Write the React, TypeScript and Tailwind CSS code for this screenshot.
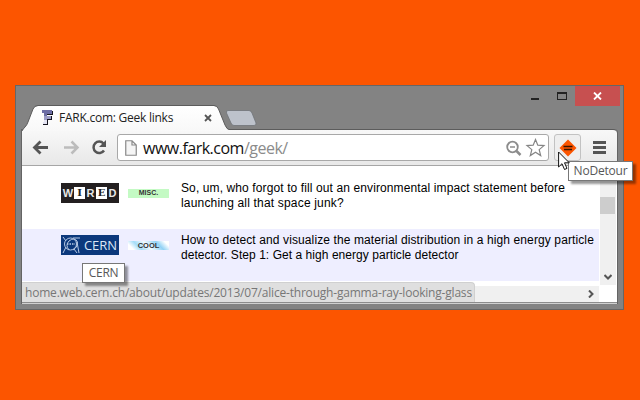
import React from "react";

const ui = "font-['Open_Sans','Noto_Sans',sans-serif]";

function TitleBar() {
  return (
    <div className="flex h-[19px] justify-end pr-[3px]">
      <svg width="50" height="19" viewBox="0 0 50 19" shapeRendering="crispEdges">
        <rect x="1" y="12" width="8" height="2" fill="#222" />
        <path d="M27 6h10v8H27zM28 8v5h8V8z" fill="#222" fillRule="evenodd" />
      </svg>
      <div className="ml-[-5px] flex h-5 w-[45px] shrink-0 items-center justify-center bg-[#c75050]">
        <svg width="9" height="8" viewBox="0 0 9 8">
          <path d="M1 .5l7 7M8 .5l-7 7" stroke="#fff" strokeWidth="1.8" />
        </svg>
      </div>
    </div>
  );
}

function TabStrip() {
  return (
    <div className="flex h-[24px] pl-[6px]">
      <div className="relative z-10 h-[26px] w-[207px] shrink-0">
        <svg className="absolute inset-0" width="207" height="26" viewBox="0 0 207 26">
          <defs>
            <linearGradient id="tab" x1="0" y1="0" x2="0" y2="1">
              <stop offset="0" stopColor="#fff" />
              <stop offset="1" stopColor="#f8f8f8" />
            </linearGradient>
          </defs>
          <path d="M0 26Q1 24 3 22Q5 20 6 17L11 4Q12.500 1 16 1H192Q195 1 196.500 4L203 20Q205 24.500 207 24.500V26Z" fill="url(#tab)" />
          <path d="M0 26Q1 24 3 22Q5 20 6 17L11 4Q12.500 .5 16 .5H192Q195 .5 196.500 4L203 20Q205 24.500 207 24.500" fill="none" stroke="#5c5c5c" />
        </svg>
        <div className="relative flex h-full items-center pl-[20px]">
          <svg className="mt-px shrink-0" width="12" height="17" viewBox="0 0 12 17" shapeRendering="crispEdges">
            <path d="M10 1H11V5H10ZM5 4H11V5H5ZM9 6H10V10H9ZM5 9H10V10H5ZM5 10H6V15H5ZM1 14H6V15H1Z" fill="#161620" />
            <path d="M0 0H10V4H5V6H9V9H5V14H1V12H2V3H0Z" fill="#6c6ca4" />
            <path d="M2 6H9V9H5V10H2Z" fill="#9c9cc6" />
            <path d="M2 10H5V14H1V12H2Z" fill="#e4e4f2" />
          </svg>
          <span className={`${ui} ml-[5px] w-[116px] whitespace-nowrap text-[12px] leading-4 tracking-[-0.25px] text-[#222]`}>FARK.com: Geek links</span>
          <svg className="ml-[29px] shrink-0" width="8" height="8" viewBox="0 0 8 8">
            <path d="M1 1l6 6M7 1L1 7" stroke="#555" strokeWidth="1.8" />
          </svg>
        </div>
      </div>
      <svg className="ml-[-4px] mt-[5px] shrink-0" width="34" height="17" viewBox="0 0 34 17">
        <path d="M3 .5H24Q26 .5 27 3L31 13Q31.500 15.500 29 15.500H9Q7 15.500 6 13L1.500 3Q1 .5 3 .5Z" fill="#bdc2cb" stroke="#707379" strokeWidth=".8" />
      </svg>
    </div>
  );
}

function Toolbar() {
  return (
    <div className="flex h-[37px] items-start rounded-tr-[4px] border-t border-[#5c5c5c] border-b border-b-[#a6a6a6] bg-linear-to-b from-[#f8f8f8] to-[#e8e8e8] pt-[4px]">
      <svg className="shrink-0" width="95" height="27" viewBox="0 0 95 27" fill="none">
        <path d="M26 13.500H13M18.500 7.500L12.500 13.500L18.500 19.500" stroke="#555" strokeWidth="2.800" />
        <path d="M42 13.500H55M49.500 7.500L55.500 13.500L49.500 19.500" stroke="#bcbcbc" strokeWidth="2.500" />
        <path d="M81.500 9.500A5.700 5.700 0 1 0 82 16.500" stroke="#555" strokeWidth="2.500" />
        <path d="M84 6V13H77Z" fill="#555" />
      </svg>
      <div className="flex h-[27px] w-[432px] shrink-0 items-center rounded-[3px] border border-[#a8a8a8] bg-white pl-[7px]">
        <svg width="12" height="16" viewBox="0 0 12 16">
          <path d="M.75.75H7L11.250 5V15.250H.75ZM7 .75V5H11" fill="#f5f5f5" stroke="#888" strokeWidth="1.200" />
        </svg>
        <div className={`${ui} ml-[6px] w-[363px] whitespace-nowrap text-[16px] leading-[22px] tracking-[-0.5px] text-[#111]`}>www.fark.com<span className="text-[#8b8b8b]">/geek/</span></div>
        <svg width="40" height="20" viewBox="0 0 40 20" fill="none">
          <circle cx="6.500" cy="9" r="5.300" stroke="#8c8c8c" strokeWidth="1.800" />
          <path d="M4 9H9" stroke="#8c8c8c" strokeWidth="1.500" />
          <path d="M10.500 13l4 4" stroke="#8c8c8c" strokeWidth="2.500" />
          <path d="M29.500 1.500l2.300 5.700 6.200.4-4.800 4 1.500 6L29.500 14.300l-5.200 3.300 1.500-6-4.800-4 6.200-.4z" stroke="#858585" strokeWidth="1.200" />
        </svg>
      </div>
      <div className="ml-[5px] flex h-[27px] w-[27px] shrink-0 items-center justify-center rounded-[3px] border border-[#c2c2c2] bg-[#eee]">
        <svg width="18" height="18" viewBox="0 0 18 18">
          <path d="M9 .5L17.500 9L9 17.500L.5 9Z" fill="#fc5500" />
          <path d="M4.500 7.500H13.500M5 10.500H13" stroke="#391500" strokeWidth="1.700" />
        </svg>
      </div>
      <svg className="ml-[12px] mt-[7px] shrink-0" width="13" height="13" viewBox="0 0 13 13" shapeRendering="crispEdges">
        <path d="M0 0h13v3H0zM0 5h13v3H0zM0 10h13v3H0z" fill="#555" />
      </svg>
    </div>
  );
}

function WiredLogo() {
  return (
    <div className="flex h-5 w-[58px] shrink-0 items-center bg-[#231f20] pl-px font-['Liberation_Sans',sans-serif] text-[11px] font-bold leading-3 text-[#e8e8e8]">
      <span className="w-[12px] text-center">W</span>
      <span className="h-3 w-[11px] bg-white text-center font-['DejaVu_Serif',serif] text-[10px] text-[#222]">I</span>
      <span className="w-[11px] text-center">R</span>
      <span className="h-3 w-[11px] bg-white text-center font-['DejaVu_Serif',serif] text-[10px] text-[#222]">E</span>
      <span className="w-[11px] text-center">D</span>
    </div>
  );
}

function CernLogo() {
  return (
    <div className="flex h-5 w-[58px] shrink-0 items-center bg-[#0b387c] pl-px">
      <svg className="shrink-0" width="19" height="18" viewBox="0 0 19 18" fill="none" stroke="#b8cae5" strokeWidth="1">
        <circle cx="8.500" cy="8" r="6" />
        <path d="M7 14Q3 9 7 5Q12 1 15 5Q17 10 11 14" />
        <path d="M1 1L4 5M4 11L1 17M11 2H18M15 6L17 17M12 13L15 17" />
        <path d="M5 8H13" strokeWidth="1.500" strokeDasharray="1.500 1" />
      </svg>
      <span className="ml-[3px] font-['Open_Sans',sans-serif] text-[13px] leading-5 tracking-[-0.1px] text-[#dce6f5]">CERN</span>
    </div>
  );
}

const tag = "flex h-[9px] w-[41px] shrink-0 items-center justify-center font-['Liberation_Sans',sans-serif] font-bold text-[#333]";
const story = "ml-[12px] whitespace-nowrap font-['Liberation_Sans',sans-serif] text-[12px] leading-[15px] text-black";

function Page() {
  return (
    <div className="flex h-[137px] border-b border-[#8c8c8c] bg-white">
      <div className="flex w-[577px] shrink-0 flex-col">
        <div className="flex h-[63px] pl-[39px] pt-[15px]">
          <div className="mt-[2px]"><WiredLogo /></div>
          <div className={`${tag} ml-[9px] mt-[8px] bg-[#c4fac4] text-[7px]`}>MISC.</div>
          <p className={story}>
            <span className="block tracking-[0.11px]">So, um, who forgot to fill out an environmental impact statement before</span>
            <span className="block tracking-[0.18px]">launching all that space junk?</span>
          </p>
        </div>
        <div className="flex h-[52px] bg-[#eeeeff] pl-[39px] pt-[4px]">
          <div className="mt-[2px]"><CernLogo /></div>
          <div className={`${tag} ml-[9px] mt-[8px] bg-[linear-gradient(45deg,#fff_12%,#a5ddf8_28%,#f2fbff_48%,#92d2f5_72%,#fff_90%)] text-[7.500px]`}>COOL</div>
          <p className={story}>
            <span className="block tracking-[0.11px]">How to detect and visualize the material distribution in a high energy particle</span>
            <span className="block tracking-[0.05px]">detector. Step 1: Get a high energy particle detector</span>
          </p>
        </div>
        <div className="mt-[5px] flex h-4 items-center justify-end bg-[#f0f0f0] pr-[5px]">
          <svg width="6" height="8" viewBox="0 0 6 8"><path d="M1 .5L4.500 4L1 7.500" fill="none" stroke="#555" strokeWidth="2" /></svg>
        </div>
      </div>
      <div className="ml-px flex h-[119px] w-[16px] flex-col items-center bg-[#f0f0f0]">
        <div className="mt-[31px] h-[17px] w-[15px] self-start bg-[#cdcdcd]" />
        <svg className="mt-[60px]" width="8" height="6" viewBox="0 0 8 6"><path d="M.5 1L4 4.500L7.500 1" fill="none" stroke="#555" strokeWidth="2" /></svg>
      </div>
    </div>
  );
}

export default function App() {
  return (
    <div className="relative h-[400px] w-[640px] overflow-hidden bg-[#fc5500] pl-[15px] pt-[85px]">
      <div className="h-[225px] w-[609px] border border-[#666] bg-[#838383]">
        <TitleBar />
        <TabStrip />
        <div className="mx-[5px] rounded-tr-[4px] border-x border-[#646464]">
          <Toolbar />
          <Page />
          <div className="h-px bg-[#d0d0d0]" />
        </div>
      </div>
      <div className={`${ui} absolute left-[22px] top-[282px] h-5 w-[453px] whitespace-nowrap rounded-tr-[4px] border-r border-t border-[#d0d0d0] bg-[#dfdfdf] pl-[3px] text-[12px] leading-[20px] tracking-[-0.2px] text-[#777]`}>home.web.cern.ch/about/updates/2013/07/alice-through-gamma-ray-looking-glass</div>
      <div className={`${ui} absolute left-[82px] top-[263px] flex h-5 w-[43px] items-center justify-center border border-[#777] bg-white text-[12px] tracking-[-0.3px] text-[#575757] shadow-[3px_3px_2px_rgba(0,0,0,0.4)]`}>CERN</div>
      <div className={`${ui} absolute left-[568px] top-[161px] flex h-5 w-[65px] items-center justify-center border border-[#777] bg-white text-[12px] tracking-[-0.2px] text-[#575757] shadow-[3px_3px_2px_rgba(0,0,0,0.4)]`}>NoDetour</div>
      <svg className="absolute left-[558px] top-[151px]" width="13" height="20" viewBox="0 0 13 20">
        <path d="M.6 1V16L4 12.700L6.500 18.500L9 17.400L6.500 11.800H11.300Z" fill="#fff" stroke="#111" />
      </svg>
    </div>
  );
}
